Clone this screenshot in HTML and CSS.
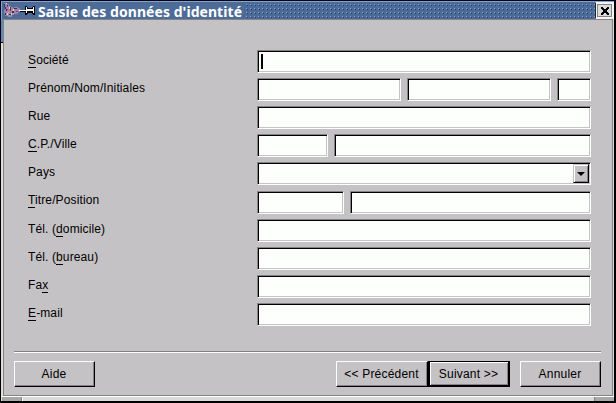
FILE: index.html
```html
<!DOCTYPE html>
<html lang="fr">
<head>
<meta charset="utf-8">
<title>Saisie des données d'identité</title>
<link rel="stylesheet" href="styles.css">
</head>
<body>
<div class="window">
  <header class="titlebar">
    <svg class="icons" width="31" height="17" viewBox="0 0 31 17" shape-rendering="crispEdges">
      <path fill="#9a86a6" d="M0 1h3v1h2v2h2v1h2v1h1v-1h4v1h2v4h-2v2h-4v1h-2v2h-4v-1h-3v-2h-1v-4h1v-3h-1z"/>
      <path fill="#3d2a66" d="M0 2h1v3h1v2h1v3h-1v-3h-1v-2h-1zM6 5h1v3h-1zM8 9h2v2h-2zM10 6h3v1h-3zM5 12h2v1h-2zM3 3h1v1h-1zM1 11h1v2h-1z"/>
      <path fill="#d66a78" d="M2 3h1v2h-1zM5 9h2v1h-2zM11 8h2v1h-2zM4 6h1v1h-1zM2 9h1v1h-1z"/>
      <path fill="#ded4c8" d="M2 1h1v1h-1zM5 5h1v2h-1zM7 11h1v2h-1zM9 7h1v2h-1zM3 11h1v2h-1z"/>
      <path fill="#9632b8" d="M3 4h1v1h-1zM12 9h2v1h-2zM6 8h1v1h-1zM3 7h1v1h-1z"/>
      <path fill="#e5bf43" d="M4 10h1v1h-1zM8 8h1v1h-1zM9 11h1v1h-1z"/>
      <path fill="#000" d="M16 9h6v1h-6zM21 4h2v1h1v1h4v-1h1v-1h2v9h-2v-1h-1v-1h-4v1h-1v1h-2z"/>
      <path fill="#fff" d="M15 8h7v1h-7zM22 5h1v6h-1zM23 7h6v2h-6zM29 5h1v6h-1z"/>
    </svg>
    <h1>Saisie des données d'identité</h1>
    <div class="grip"></div>
    <button class="close" aria-label="Fermer">
      <svg width="8" height="8" viewBox="0 0 8 8" shape-rendering="crispEdges"><path d="M0 0h2v1h1v1h2v-1h1v-1h2v2h-1v1h-1v2h1v1h1v2h-2v-1h-1v-1h-2v1h-1v1h-2v-2h1v-1h1v-2h-1v-1h-1z"/></svg>
    </button>
  </header>
  <main class="panel">
    <form class="form">
      <div class="row"><label><u>S</u>ociété</label><div class="field"><i class="caret"></i></div></div>
      <div class="row"><label>Prénom/Nom/Initiales</label><div class="field name"></div><div class="field name"></div><div class="field"></div></div>
      <div class="row"><label>Rue</label><div class="field"></div></div>
      <div class="row"><label><u>C</u>.P./Ville</label><div class="field zip"></div><div class="field"></div></div>
      <div class="row tall"><label>Pays</label><div class="field"><span class="drop"><i></i></span></div></div>
      <div class="row"><label class="up"><u>T</u>itre/Position</label><div class="field title"></div><div class="field"></div></div>
      <div class="row"><label>Tél. (<u>d</u>omicile)</label><div class="field"></div></div>
      <div class="row"><label>Tél. (<u>b</u>ureau)</label><div class="field"></div></div>
      <div class="row"><label>Fa<u>x</u></label><div class="field"></div></div>
      <div class="row"><label><u>E</u>-mail</label><div class="field"></div></div>
    </form>
    <footer class="actions">
      <div class="btn help">Aide</div>
      <div class="btn prev">&lt;&lt; Précédent</div>
      <div class="btn next">Suivant &gt;&gt;</div>
      <div class="btn cancel">Annuler</div>
    </footer>
  </main>
  <div class="resize"><i></i><b></b><i></i></div>
</div>
</body>
</html>
```
FILE: styles.css
```css
* { box-sizing: border-box; }
body { margin: 0; background: #000; overflow: hidden; font: 12px/14px "Liberation Sans", Arial, sans-serif; color: #000; }
.window { width: 616px; height: 403px; border: 1px solid #000; border-right-width: 2px; border-bottom-width: 2px; display: flex; flex-direction: column; background: linear-gradient(90deg, transparent 50%, #d8dcd8 50%), linear-gradient(#6487bd 41px, #000 41px 42px, #e0e0d8 42px); }
.titlebar { height: 18px; flex: none; display: flex; background: #4d6b97; border-top: 1px solid #7fa3dd; border-left: 1px solid #7fa3dd; }
.icons { margin-left: 2px; flex: none; }
h1 { margin: 0 0 0 3px; width: 208px; flex: none; font: bold 14px/19px "Noto Sans", sans-serif; letter-spacing: .06px; color: #fff; white-space: nowrap; }
.grip { flex: 1; background: conic-gradient(from 0deg at 1px 1px, transparent 75%, #7fa3dd 0) 0 2px / 4px 4px, conic-gradient(from 0deg at 1px 1px, transparent 75%, #253f6b 0) 1px 3px / 4px 4px; }
.close { width: 19px; height: 17px; padding: 0; border: 1px solid #f4f4f4; border-left-color: #222; box-shadow: inset 0 0 0 1px #f4f4f4, inset 0 0 0 2px #848284; background: #d8dcd8; display: flex; align-items: center; justify-content: center; }
.panel { flex: none; margin: 0 1px 0 2px; height: 377px; background: #c5c2c5; border: 1px solid #848284; padding: 30px 10px 0; }
.form { height: 301px; padding-left: 14px; }
.row { display: flex; gap: 6px; height: 23px; margin-bottom: 5px; width: 563px; }
.row.tall { margin-bottom: 6px; }
label { width: 223px; flex: none; padding-top: 3px; letter-spacing: .12px; }
label.up { padding-top: 2px; }
u { text-decoration: none; border-bottom: 1px solid #000; }
.field { flex: 1; position: relative; background: #fcfffc; border: 1px solid #848284; border-right-color: #fff; border-bottom-color: #fff; box-shadow: inset 1px 1px #000, inset -1px -1px #c5c5c5; }
.name { flex: 0 0 144px; }
.zip { flex: 0 0 71px; }
.title { flex: 0 0 87px; }
.caret { position: absolute; left: 3px; top: 3px; width: 2px; height: 15px; background: #000; }
.drop { position: absolute; right: 1px; top: 1px; width: 16px; height: 19px; background: #c5c2c5; border: 1px solid #c5c2c5; border-right-color: #000; border-bottom-color: #000; box-shadow: inset 1px 1px #fff, inset -1px -1px #848284; display: grid; place-items: center; }
.drop i { border: 4px solid transparent; border-top-color: #000; border-bottom: 0; }
.actions { border-top: 1px solid #848284; box-shadow: inset 0 1px #fff; width: 587px; padding-top: 9px; display: flex; }
.btn { height: 26px; width: 81px; line-height: 24px; padding-right: 1px; text-align: center; border: 1px solid #fff; border-right-color: #000; border-bottom-color: #000; box-shadow: inset -1px -1px #848284; letter-spacing: .2px; }
.prev { width: 92px; margin-left: 241px; }
.next { width: 82px; border: 1px solid #000; border-width: 1px 2px 2px; box-shadow: inset 1px 1px #fff, inset -1px -1px #848284; }
.cancel { margin-left: 10px; }
.resize { flex: 1; display: flex; background: #d8dcd8; border-top: 1px solid #fff; margin-left: 1px; }
.resize i { width: 19px; background: #a5aaa5; }
.resize b { flex: 1; border: solid; border-width: 0 1px; border-color: #fff #848284 #fff #848284; box-shadow: inset 1px 0 #fff; }
```
